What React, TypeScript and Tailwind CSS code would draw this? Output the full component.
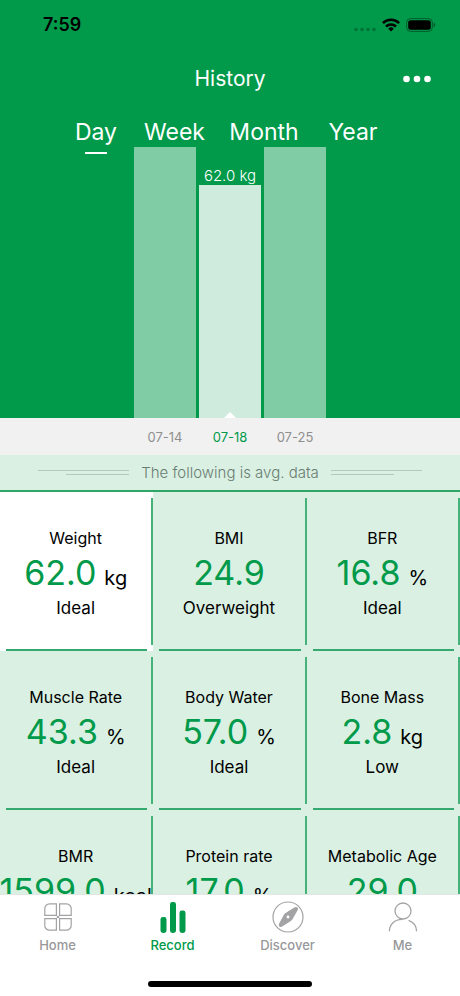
import React, { useState } from "react";

type Metric = { label: string; value: string; unit?: string; status: string };

const metrics: Metric[] = [
  { label: "Weight", value: "62.0", unit: "kg", status: "Ideal" },
  { label: "BMI", value: "24.9", status: "Overweight" },
  { label: "BFR", value: "16.8", unit: "%", status: "Ideal" },
  { label: "Muscle Rate", value: "43.3", unit: "%", status: "Ideal" },
  { label: "Body Water", value: "57.0", unit: "%", status: "Ideal" },
  { label: "Bone Mass", value: "2.8", unit: "kg", status: "Low" },
  { label: "BMR", value: "1599.0", unit: "kcal", status: "Ideal" },
  { label: "Protein rate", value: "17.0", unit: "%", status: "Ideal" },
  { label: "Metabolic Age", value: "29.0", status: "Ideal" },
];

const ranges = ["Day", "Week", "Month", "Year"];
const dates = ["07-14", "07-18", "07-25"];

function StatusBar() {
  return (
    <div className="flex h-[50px] items-center justify-between pr-6 pl-[43px] text-black">
      <span className="text-[18px] leading-6 font-semibold">7:59</span>
      <div className="flex items-center gap-[6px]">
        <svg width="22" height="14" viewBox="0 0 22 14" fill="#000" fillOpacity="0.25">
          <circle cx="2" cy="11.5" r="1.8" />
          <circle cx="8" cy="11.5" r="1.8" />
          <circle cx="14" cy="11.5" r="1.8" />
          <circle cx="20" cy="11.5" r="1.8" />
        </svg>
        <svg width="18" height="14" viewBox="0 0 18 14" fill="none" stroke="#000" strokeWidth="2.6">
          <path d="M0.9 5.1a11.6 11.6 0 0 1 16.2 0" />
          <path d="M4 8.5a7.2 7.2 0 0 1 10 0" />
          <path d="M9 13.5 6.2 10.7a4 4 0 0 1 5.6 0z" fill="#000" stroke="none" />
        </svg>
        <svg width="30" height="14" viewBox="0 0 30 14">
          <rect x="0.6" y="0.6" width="25.8" height="12.8" rx="4" fill="none" stroke="#000" strokeOpacity="0.4" />
          <rect x="2.2" y="2.2" width="22.6" height="9.6" rx="2.4" />
          <path d="M27.7 4.8v4.4c1-.4 1.5-1.2 1.5-2.2s-.5-1.8-1.5-2.2z" fillOpacity="0.45" />
        </svg>
      </div>
    </div>
  );
}

function Chart() {
  return (
    <div className="flex h-[271px] items-end justify-center gap-[3px]">
      <div className="h-full w-[62px] bg-[#80cda5]" />
      <div className="flex w-[62px] flex-col items-center">
        <span className="text-[15px] leading-[18px] font-light whitespace-nowrap text-white">62.0 kg</span>
        <div className="flex h-[233px] w-full items-end justify-center bg-[#cfebdd]">
          <svg width="12" height="6" viewBox="0 0 12 6" fill="#fff">
            <path d="M0 6 6 0l6 6z" />
          </svg>
        </div>
      </div>
      <div className="h-full w-[62px] bg-[#80cda5]" />
    </div>
  );
}

function MetricCell({ metric, active }: { metric: Metric; active: boolean }) {
  return (
    <div className={`flex h-[159px] min-w-0 flex-col ${active ? "bg-white" : ""}`}>
      <div className="mt-[6px] flex h-[147px] justify-center border-r-2 border-[#45b27a]">
        <div className="flex flex-col items-center pt-[30px] whitespace-nowrap text-black">
          <span className="text-[16px] leading-5">{metric.label}</span>
          <span className="flex h-[50px] items-baseline gap-2">
            <span className="text-[34px] leading-[50px] text-[#009a4a]">{metric.value}</span>
            {metric.unit && <span className="text-[20px] leading-6">{metric.unit}</span>}
          </span>
          <span className="text-[17px] leading-5">{metric.status}</span>
        </div>
      </div>
      <div className="mx-[6px] mt-[4px] h-[2px] bg-[#35a96f]" />
    </div>
  );
}

const navItems = [
  {
    label: "Home",
    icon: (
      <svg width="32" height="32" viewBox="0 0 32 32" fill="none" stroke="#a3a3a5" strokeWidth="1.2">
        <path d="M7.6 2.8h6.8v11.6H2.8V7.6a4.8 4.8 0 0 1 4.8-4.8z" />
        <path d="M24.4 2.8h-6.8v11.6h11.6V7.6a4.8 4.8 0 0 0-4.8-4.8z" />
        <path d="M7.6 29.2h6.8V17.6H2.8v6.8a4.8 4.8 0 0 0 4.8 4.8z" />
        <path d="M24.4 29.2h-6.8V17.6h11.6v6.8a4.8 4.8 0 0 1-4.8 4.8z" />
        <circle cx="16" cy="16" r="1.3" fill="#a3a3a5" stroke="none" />
      </svg>
    ),
  },
  {
    label: "Record",
    icon: (
      <svg width="32" height="32" viewBox="0 0 32 32" fill="#009a4a">
        <rect x="3.5" y="16" width="6" height="16" rx="2.4" />
        <rect x="13" y="1" width="6" height="31" rx="2.4" />
        <rect x="22.5" y="9.5" width="6" height="22.5" rx="2.4" />
      </svg>
    ),
  },
  {
    label: "Discover",
    icon: (
      <svg width="32" height="32" viewBox="0 0 32 32">
        <circle cx="16" cy="16" r="15" fill="none" stroke="#a3a3a5" strokeWidth="1.2" />
        <path
          d="M25.4 6.6c.9.8.7 1.8.2 2.7l-4.8 8.5c-.6 1-1 1.5-2 2.2l-8.2 5.3c-1 .7-2.2 1-3.2.1-.9-1-.7-1.9-.2-2.9l4.4-8.2c.6-1 1-1.5 2-2.2l8.8-5.6c1-.6 2.1-.8 3 .1z"
          fill="#a3a3a5"
        />
        <circle cx="16" cy="16" r="1.4" fill="#fff" />
      </svg>
    ),
  },
  {
    label: "Me",
    icon: (
      <svg width="32" height="32" viewBox="0 0 32 32" fill="none" stroke="#a3a3a5" strokeWidth="1.3" strokeLinecap="round">
        <circle cx="16" cy="10" r="8" />
        <path d="M2.4 29.8C2.7 23.5 7.5 18.4 15 18.3" />
        <path d="M22 19.6c4.4 1.6 7.3 5.3 7.5 10.2" />
      </svg>
    ),
  },
];

export default function App() {
  const [range, setRange] = useState("Day");
  const [date, setDate] = useState("07-18");

  return (
    <div className="flex h-screen flex-col overflow-hidden bg-white font-['Inter','Liberation_Sans',sans-serif]">
      <header className="shrink-0 bg-[#009a4a] text-white">
        <StatusBar />
        <div className="grid h-[58px] grid-cols-3 items-center px-7">
          <h1 className="col-start-2 text-center text-[21px] leading-7">History</h1>
          <button aria-label="More options" className="flex h-8 items-center justify-self-end">
            <svg width="30" height="8" viewBox="0 0 30 8" fill="#fff">
              <circle cx="4.5" cy="4" r="3.3" />
              <circle cx="15" cy="4" r="3.3" />
              <circle cx="25.5" cy="4" r="3.3" />
            </svg>
          </button>
        </div>
        <nav className="grid h-[39px] grid-cols-[86fr_71fr_108fr_70fr] pt-2 pr-[72px] pl-[53px]">
          {ranges.map((r) => (
            <div key={r} className="flex justify-center">
              <button onClick={() => setRange(r)} className="flex flex-col items-center">
                <span className="text-[23px] leading-8">{r}</span>
                {r === range && <span className="mt-[4px] h-[2px] w-[22px] shrink-0 bg-white" />}
              </button>
            </div>
          ))}
        </nav>
        <Chart />
      </header>

      <div className="flex h-[37px] shrink-0 items-center justify-center gap-[3px] bg-[#f1f1f1]">
        {dates.map((d) => (
          <button
            key={d}
            onClick={() => setDate(d)}
            className={`w-[62px] text-center text-[13px] leading-4 ${d === date ? "text-[#009a4a]" : "text-[#8f8f8f]"}`}
          >
            {d}
          </button>
        ))}
      </div>

      <main className="min-h-0 flex-1 overflow-hidden bg-[#daf0e3]">
        <div className="flex h-[37px] items-center justify-between border-b-2 border-[#2fa768] px-[38px]">
          <div className="flex flex-1 flex-col items-end gap-[3px]">
            <div className="h-px w-full bg-[#b4c9bd]" />
            <div className="h-px w-[63px] bg-[#b4c9bd]" />
          </div>
          <p className="px-3 text-[15px] leading-5 font-light text-[#687c71]">The following is avg. data</p>
          <div className="flex flex-1 flex-col items-start gap-[3px]">
            <div className="h-px w-full bg-[#b4c9bd]" />
            <div className="h-px w-[63px] bg-[#b4c9bd]" />
          </div>
        </div>
        <section className="grid grid-cols-3">
          {metrics.map((m, i) => (
            <MetricCell key={m.label} metric={m} active={i === 0} />
          ))}
        </section>
      </main>

      <footer className="flex h-[102px] shrink-0 flex-col items-center justify-between border-t border-[#e3e6e4] bg-white pt-[6px] pb-[9px]">
        <nav className="grid w-full grid-cols-4">
          {navItems.map((n) => (
            <button
              key={n.label}
              className={`flex flex-col items-center gap-1 text-[13px] leading-4 font-medium ${
                n.label === "Record" ? "text-[#009a4a]" : "text-[#98989a]"
              }`}
            >
              {n.icon}
              {n.label}
            </button>
          ))}
        </nav>
        <div className="h-[6px] w-[164px] rounded-full bg-black" />
      </footer>
    </div>
  );
}
